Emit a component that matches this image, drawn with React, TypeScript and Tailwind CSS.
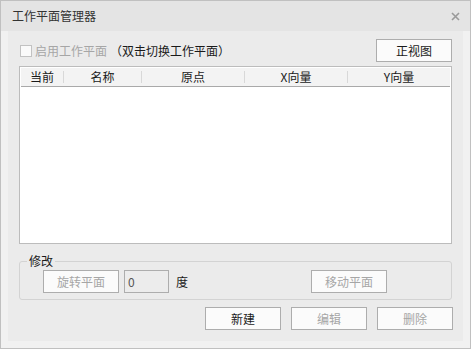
import * as React from "react";

const cols = [
  { label: "当前", w: "w-[43px]" },
  { label: "名称", w: "w-[78px]" },
  { label: "原点", w: "w-[103px]" },
  { label: "X向量", w: "w-[103px]" },
  { label: "Y向量", w: "flex-1" },
];

function Btn({ children, disabled = false, className = "" }: { children: React.ReactNode; disabled?: boolean; className?: string }) {
  return (
    <button
      type="button"
      className={`flex h-[23px] w-[76px] items-center justify-center border border-[#adadad] bg-[#fbfbfb] leading-none ${
        disabled ? "text-[#a6a6a6]" : "text-[#1a1a1a]"
      } ${className}`}
    >
      {children}
    </button>
  );
}

export default function App() {
  return (
    <div className="flex h-[349px] w-[471px] flex-col border border-[#c0c0c0] bg-[#f1f1f1] font-['Noto_Sans_CJK_SC',sans-serif] text-[12px] text-[#1a1a1a]">
      <div className="flex h-[30px] items-center justify-between bg-[#e4e4e4] pl-[11px] pr-[10px]">
        <span className="text-[#333]">工作平面管理器</span>
        <svg width="9" height="9" viewBox="0 0 9 9" className="mt-[1px]">
          <path d="M1 1L8 8M8 1L1 8" stroke="#9a9a9a" strokeWidth="1.6" />
        </svg>
      </div>

      <div className="flex flex-1 flex-col px-[7px] pb-[7px]">
        <div className="flex flex-1 flex-col bg-[#ebebeb] px-[11px]">
          <div className="mt-[8px] flex h-[23px] items-center">
            <span className="ml-[1px] mr-[3px] h-[12px] w-[12px] border border-[#c2c2c2] bg-[#fafafa]" />
            <span className="text-[#a6a6a6]">启用工作平面</span>
            <span className="ml-[3px]">（双击切换工作平面）</span>
            <Btn className="ml-auto">正视图</Btn>
          </div>

          <div className="mt-[4px] flex h-[178px] flex-col border border-[#bcbcbc] bg-white p-[1px]">
            <div className="flex h-[19px] items-center border-b border-[#a9a9a9] bg-[#f3f3f3]">
              {cols.map((c, i) => (
                <div key={c.label} className={`flex h-full items-center ${c.w}`}>
                  <span className="flex-1 text-center">{c.label}</span>
                  {i < cols.length - 1 && <span className="h-[12px] w-px bg-[#d8d8d8]" />}
                </div>
              ))}
            </div>
          </div>

          <fieldset className="mt-[9px] rounded-[3px] border border-[#d3d3d3] pb-[6px]">
            <legend className="ml-[7px] px-[2px] leading-[16px]">修改</legend>
            <div className="mt-[1px] flex h-[23px] items-center">
              <Btn disabled className="ml-[23px]">旋转平面</Btn>
              <div className="ml-[5px] flex h-[23px] w-[45px] items-center border border-[#adadad] bg-[#ececec] pl-[3px] text-[#555]">
                0
              </div>
              <span className="ml-[7px]">度</span>
              <Btn disabled className="ml-auto mr-[64px]">移动平面</Btn>
            </div>
          </fieldset>

          <div className="mt-[7px] flex items-center justify-end gap-[10px]">
            <Btn>新建</Btn>
            <Btn disabled>编辑</Btn>
            <Btn disabled className="-mr-[1px]">删除</Btn>
          </div>
        </div>
      </div>
    </div>
  );
}
